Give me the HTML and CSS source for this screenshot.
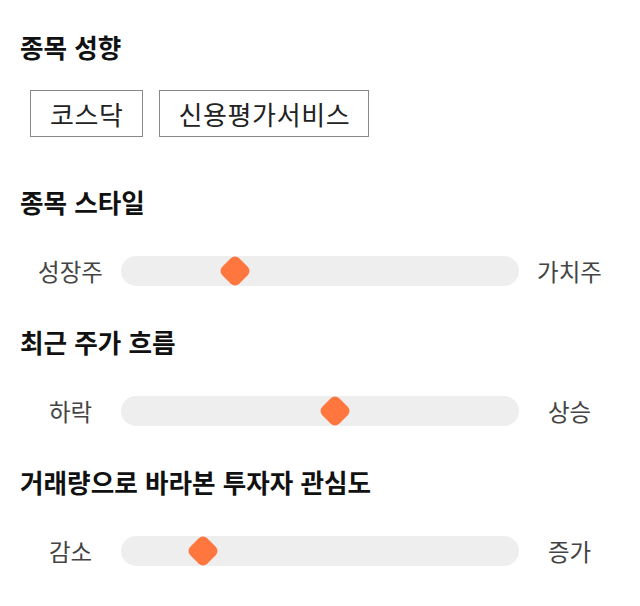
FILE: index.html
```html
<!DOCTYPE html>
<html lang="ko">
<head>
    <meta charset="UTF-8">
    <meta name="viewport" content="width=device-width, initial-scale=1.0">
    <title>종목 성향</title>
    <link rel="stylesheet" href="styles.css">
</head>
<body>

<div class="stock-profile">
    <div class="group group-tags">
        <h2 class="group-title">종목 성향</h2>
        <div class="tags">
            <span class="tag">코스닥</span>
            <span class="tag">신용평가서비스</span>
        </div>
    </div>

    <div class="group">
        <h2 class="group-title">종목 스타일</h2>
        <div class="scale">
            <span class="scale-label">성장주</span>
            <div class="track"><span class="thumb" style="left: 28.6%"></span></div>
            <span class="scale-label">가치주</span>
        </div>
    </div>

    <div class="group">
        <h2 class="group-title">최근 주가 흐름</h2>
        <div class="scale">
            <span class="scale-label">하락</span>
            <div class="track"><span class="thumb" style="left: 53.8%"></span></div>
            <span class="scale-label">상승</span>
        </div>
    </div>

    <div class="group">
        <h2 class="group-title">거래량으로 바라본 투자자 관심도</h2>
        <div class="scale">
            <span class="scale-label">감소</span>
            <div class="track"><span class="thumb" style="left: 20.6%"></span></div>
            <span class="scale-label">증가</span>
        </div>
    </div>
</div>

</body>
</html>
```

FILE: styles.css
```css
body {
    margin: 0;
    font-family: "Noto Sans CJK KR", "Noto Sans", sans-serif;
    background: #ffffff;
    color: #111;
}
.stock-profile {
    padding: 32px 20px 0;
}
.group {
    margin-bottom: 41px;
}
.group-tags {
    margin-bottom: 50px;
}
.group-title {
    margin: 0 0 39px;
    font-size: 25.6px;
    font-weight: bold;
    line-height: 30px;
}
.group-tags .group-title {
    margin-bottom: 28px;
}
.tags {
    display: flex;
    gap: 16px;
    padding-left: 10px;
}
.tag {
    display: flex;
    align-items: center;
    justify-content: center;
    height: 45px;
    padding: 0 18px 0 19px;
    border: 1px solid #888;
    font-size: 26px;
    letter-spacing: 0.6px;
    color: #222;
}
.scale {
    display: flex;
    align-items: center;
    height: 30px;
}
.scale-label {
    width: 101px;
    text-align: center;
    font-size: 23.5px;
    color: #444;
}
.track {
    position: relative;
    flex: 1;
    height: 30px;
    background: #eeeeee;
    border-radius: 15px;
}
.thumb {
    position: absolute;
    top: 3px;
    width: 24px;
    height: 24px;
    margin-left: -12px;
    background: #ff773f;
    border-radius: 6px;
    transform: rotate(45deg);
}
```
